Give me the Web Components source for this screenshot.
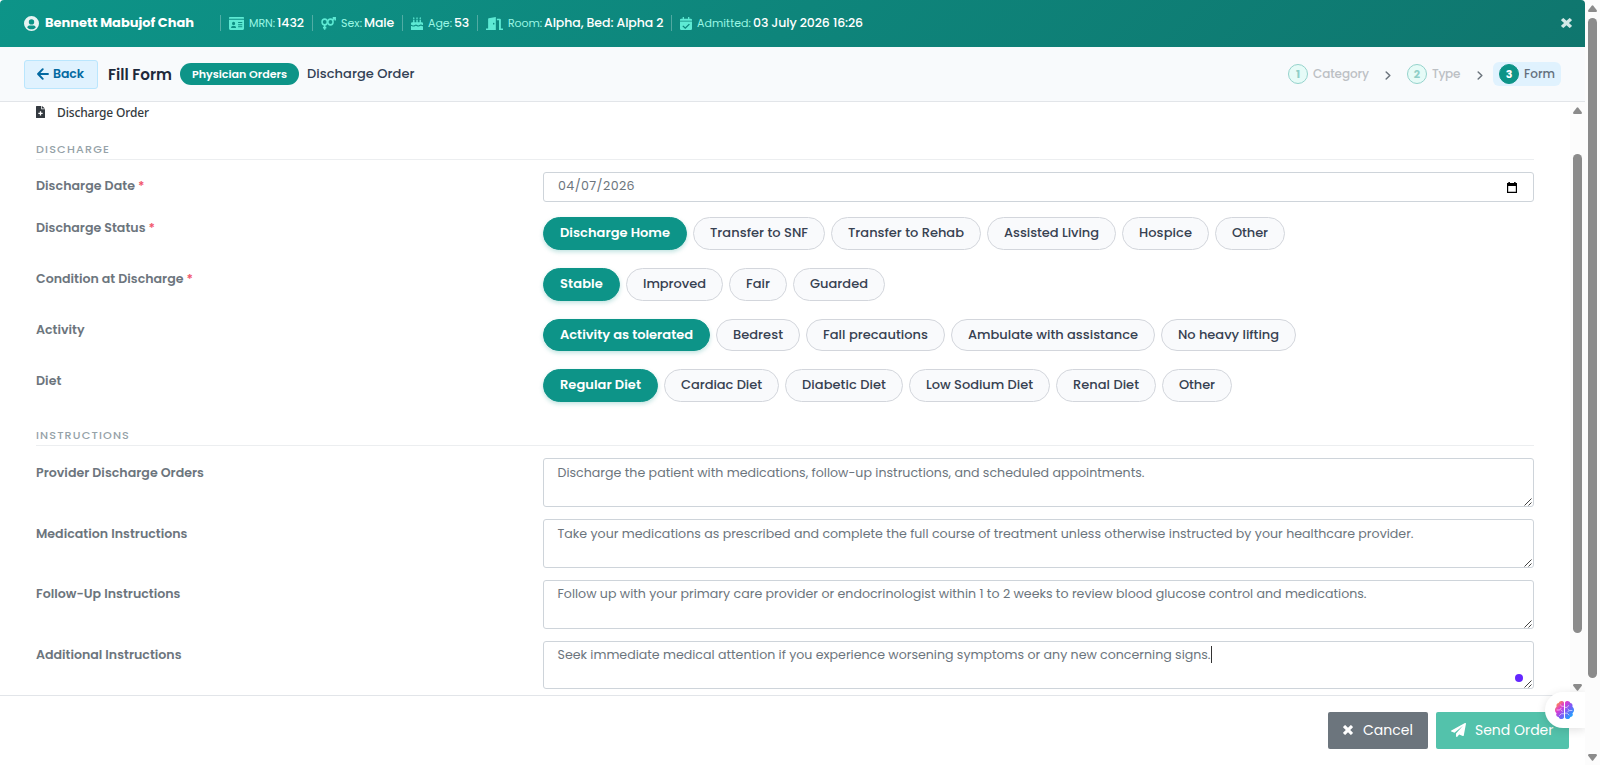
<!DOCTYPE html>
<html lang="en">
<head>
<meta charset="UTF-8">
<title>Discharge Order</title>
<style>
  body {
    margin: 0;
    font-family: Poppins, Inter, "Open Sans", sans-serif;
    background: #fff;
    overflow: hidden;
  }
</style>
</head>
<body>
<order-page></order-page>

<script>
const icons = {
  user: ["0 0 512 512", `<path fill-rule="evenodd" d="M256 0a256 256 0 1 0 0 512 256 256 0 0 0 0-512zm0 110a92 92 0 1 1 0 184 92 92 0 0 1 0-184zM110 390c12-44 48-66 82-66h128c34 0 70 22 82 66-36 42-88 66-146 66s-110-24-146-66z"/>`],
  card: ["0 0 576 448", `<path fill-rule="evenodd" d="M30 0h516a30 30 0 0 1 30 30v34H0V30A30 30 0 0 1 30 0zM0 96h576v304a48 48 0 0 1-48 48H48a48 48 0 0 1-48-48zm176 64a60 60 0 1 0 0 120 60 60 0 0 0 0-120zM80 376h192c0-40-24-66-56-66h-80c-32 0-56 26-56 66zM350 176v32h160v-32zm0 72v32h160v-32zm0 72v32h160v-32z"/>`],
  sex: ["0 0 640 512", `<g fill="none" stroke="currentColor" stroke-width="64"><circle cx="156" cy="196" r="112"/><circle cx="404" cy="196" r="112"/><path d="M156 306v200M84 416h144M488 116L600 26M500 32h106v106"/></g>`],
  cake: ["0 0 448 512", `<path d="M80 110h50v110h-50zM200 110h50v110h-50zM320 110h50v110h-50zM105 0c34 42 34 88 0 88s-34-46 0-88zM225 0c34 42 34 88 0 88s-34-46 0-88zM345 0c34 42 34 88 0 88s-34-46 0-88zM48 210h352a48 48 0 0 1 48 48v58c-40 0-50-24-88-24s-50 40-88 40-48-40-86-40-52 40-90 40-54-40-96-30v-44a48 48 0 0 1 48-48zM0 352c30-10 40 24 92 24s54-34 90-34 46 34 88 34 54-34 90-34 48 26 88 24v146H0z"/>`],
  door: ["0 0 640 512", `<path fill-rule="evenodd" d="M370 0v512H0v-64h80V80c0-14 8-24 20-28zM290 230a28 34 0 1 0 0 68 28 34 0 0 0 0-68zM410 64h110a40 40 0 0 1 40 40v344h80v64H490V128h-80z"/>`],
  calcheck: ["0 0 448 512", `<path fill-rule="evenodd" d="M100 0h48v64h152V0h48v64h52a48 48 0 0 1 48 48v32H0v-32a48 48 0 0 1 48-48h52zM0 176h448v288a48 48 0 0 1-48 48H48a48 48 0 0 1-48-48zm122 158-34 34 108 102 172-170-34-34-138 134z"/>`],
  times: ["0 0 352 352", `<path d="M86 8 176 98 266 8q12-10 24 0l54 54q10 12 0 24l-90 90 90 90q10 12 0 24l-54 54q-12 10-24 0l-90-90-90 90q-12 10-24 0L8 290q-10-12 0-24l90-90L8 86q-10-12 0-24L62 8q12-10 24 0z"/>`],
  arrow: ["0 0 448 448", `<path fill="none" stroke="currentColor" stroke-width="72" stroke-linecap="round" stroke-linejoin="round" d="M214 44 40 224l174 180M46 224h364"/>`],
  chevron: ["0 0 256 400", `<path fill="none" stroke="currentColor" stroke-width="62" stroke-linecap="round" stroke-linejoin="round" d="M50 40l156 160L50 360"/>`],
  file: ["0 0 384 512", `<path fill-rule="evenodd" d="M24 0h200v136h160v352a24 24 0 0 1-24 24H24a24 24 0 0 1-24-24V24A24 24 0 0 1 24 0zm232 0 128 104H256zM164 224v64h-64v56h64v64h56v-64h64v-56h-64v-64z"/>`],
  plane: ["0 0 512 512", `<path d="M476 3 12 271c-18 10-16 34 0 42l107 44L407 104 172 383v104c0 22 28 32 42 16l64-78 125 51c14 6 30-2 33-18l75-432c3-20-18-33-35-23z"/>`],
  calendar: ["0 0 11 12", `<path fill-rule="evenodd" d="M1.5 0h1.7v1h4.6V0h1.7v1H11v11H0V1h1.5zM1.3 4.3v6.4h8.4V4.3z"/>`],
  brain: ["0 0 36 34", `<defs><linearGradient id="g" gradientUnits="userSpaceOnUse" x1="4" y1="2" x2="32" y2="30"><stop offset="0" stop-color="#ff9a3c"/><stop offset=".3" stop-color="#e03ad0"/><stop offset=".6" stop-color="#7c5cf6"/><stop offset="1" stop-color="#18a8ff"/></linearGradient></defs>
    <path fill="url(#g)" d="M17 3v28c-2 4-9 4-10-1-4 0-6-4-4-7-4-3-4-9 0-12-1-4 1-7 4-7C8-1 16-1 17 3zM19 3v28c2 4 9 4 10-1 4 0 6-4 4-7 4-3 4-9 0-12 1-4-1-7-4-7-1-5-9-5-10-1z"/>
    <path fill="none" stroke="#fff" stroke-opacity=".8" stroke-width="1.4" d="M17 10h-4l-3-3M3 17h6l3-4M17 24h-5l-4 4M12 17l2 3M19 12h4l3-4M33 18h-6l-3-3M19 23h4l4 4M26 18l-2 3"/>`],
};

class UiIcon extends HTMLElement {
  constructor() {
    super();
    this.attachShadow({ mode: "open" });
  }

  connectedCallback() {
    const [box, shape] = icons[this.getAttribute("name")];
    const w = this.getAttribute("w") || 12;
    const h = this.getAttribute("h") || 12;

    this.shadowRoot.innerHTML = `
      <style>
        :host { display: block; flex: none; width: ${w}px; height: ${h}px; }
        svg { display: block; width: 100%; height: 100%; }
      </style>
      <svg viewBox="${box}" fill="currentColor" preserveAspectRatio="none">${shape}</svg>
    `;
  }
}

// One line of text, tracked so that it fills the width given in "w".
class TextLine extends HTMLElement {
  constructor() {
    super();
    this.attachShadow({ mode: "open" });
  }

  connectedCallback() {
    const w = Number(this.getAttribute("w"));

    this.shadowRoot.innerHTML = `
      <style>
        :host { display: block; flex: none; width: ${w}px; white-space: nowrap; }
        span { display: inline-block; }
      </style>
      <span><slot></slot></span>
    `;

    const span = this.shadowRoot.querySelector("span");
    const natural = span.getBoundingClientRect().width;
    span.style.letterSpacing = (w - natural) / this.textContent.length + "px";
  }
}

class PatientItem extends HTMLElement {
  constructor() {
    super();
    this.attachShadow({ mode: "open" });
  }

  connectedCallback() {
    const a = (name) => this.getAttribute(name);

    this.shadowRoot.innerHTML = `
      <style>
        :host {
          display: flex;
          align-items: center;
          box-sizing: border-box;
          flex: none;
          width: ${a("w")}px;
          height: 16px;
          padding-left: 8px;
          border-left: 1px solid rgba(255, 255, 255, 0.28);
          font-size: 12.5px;
          font-weight: 500;
          color: #fff;
        }
        ui-icon { color: #5eead4; margin-right: 5px; }
        .label { color: #99f6e4; font-size: 11px; font-weight: 400; margin: 1px 2px 0 0; }
      </style>
      <ui-icon name="${a("icon")}" w="${a("icon-w")}" h="13"></ui-icon>
      <text-line class="label" w="${a("label-w")}">${a("label")}</text-line>
      <text-line w="${a("value-w")}">${a("value")}</text-line>
    `;
  }
}

class PatientBar extends HTMLElement {
  constructor() {
    super();
    this.attachShadow({ mode: "open" });
  }

  connectedCallback() {
    this.shadowRoot.innerHTML = `
      <style>
        :host {
          display: flex;
          align-items: center;
          box-sizing: border-box;
          height: 47px;
          padding: 0 13px 1px 24px;
          border-radius: 4px 4px 0 0;
          background: linear-gradient(135deg, #0d9488 0%, #0f766e 100%);
          color: #fff;
        }
        .avatar { opacity: 0.9; margin-right: 6px; }
        .name { font-size: 13px; font-weight: 700; margin-right: 26px; }
        .close { margin-left: auto; color: #d3e8e6; }
      </style>
      <ui-icon class="avatar" name="user" w="15" h="15"></ui-icon>
      <text-line class="name" w="149">Bennett Mabujof Chah</text-line>
      <patient-item w="92" icon="card" icon-w="15" label="MRN:" label-w="26" value="1432" value-w="27"></patient-item>
      <patient-item w="90" icon="sex" icon-w="15" label="Sex:" label-w="21" value="Male" value-w="30"></patient-item>
      <patient-item w="75" icon="cake" icon-w="12" label="Age:" label-w="24" value="53" value-w="15"></patient-item>
      <patient-item w="194" icon="door" icon-w="17" label="Room:" label-w="34" value="Alpha, Bed: Alpha 2" value-w="119.5"></patient-item>
      <patient-item w="200" icon="calcheck" icon-w="12" label="Admitted:" label-w="54" value="03 July 2026 16:26" value-w="110"></patient-item>
      <ui-icon class="close" name="times" w="11" h="10"></ui-icon>
    `;
  }
}

class StepItem extends HTMLElement {
  constructor() {
    super();
    this.attachShadow({ mode: "open" });
  }

  connectedCallback() {
    this.shadowRoot.innerHTML = `
      <style>
        :host {
          display: flex;
          align-items: center;
          gap: 5px;
          height: 24px;
          padding: 0 6px;
          border-radius: 6px;
          font-size: 12px;
          font-weight: 500;
          color: #bcc0c4;
        }
        :host([active]) { background: #e0f2fe; color: #64707d; }
        .num {
          box-sizing: border-box;
          width: 20px;
          height: 20px;
          border: 1px solid #95d3cc;
          border-radius: 50%;
          display: grid;
          place-items: center;
          font-size: 11px;
          font-weight: 700;
          background: #e6fbf7;
          color: #8fcfc8;
        }
        :host([active]) .num { background: #0d9488; border-color: #0d9488; color: #fff; }
      </style>
      <div class="num">${this.getAttribute("num")}</div>
      <text-line w="${this.getAttribute("w")}">${this.getAttribute("label")}</text-line>
    `;
  }
}

class FormToolbar extends HTMLElement {
  constructor() {
    super();
    this.attachShadow({ mode: "open" });
  }

  connectedCallback() {
    this.shadowRoot.innerHTML = `
      <style>
        :host {
          display: flex;
          align-items: center;
          box-sizing: border-box;
          height: 55px;
          padding: 0 24px;
          background: #f8fafc;
          border-bottom: 1px solid #e2e5e9;
        }
        .back {
          display: flex;
          align-items: center;
          gap: 4px;
          box-sizing: border-box;
          width: 74px;
          height: 29px;
          padding: 0 12px;
          border: 1px solid #bae6fd;
          border-radius: 3px;
          background: #e0f2fe;
          color: #0369a1;
          font: 600 12.5px Poppins, Inter, sans-serif;
        }
        .title { margin-left: 10px; font-size: 15.2px; font-weight: 600; color: #1e293b; }
        .badge {
          display: grid;
          place-items: center;
          width: 119px;
          height: 22px;
          margin: 0 8px;
          border-radius: 11px;
          background: #0d9488;
          color: #fff;
          font-size: 11.1px;
          font-weight: 600;
        }
        .crumb { font-size: 13px; font-weight: 500; color: #334155; }
        .steps { display: flex; align-items: center; margin-left: auto; }
        .steps ui-icon { margin: 2px 10px 0; color: #6c757d; }
        .steps ui-icon.last { margin-left: 11px; }
      </style>
      <button class="back"><ui-icon name="arrow" w="12" h="12"></ui-icon><text-line w="31">Back</text-line></button>
      <text-line class="title" w="64">Fill Form</text-line>
      <div class="badge"><text-line w="95">Physician Orders</text-line></div>
      <text-line class="crumb" w="107.5">Discharge Order</text-line>
      <div class="steps">
        <step-item num="1" label="Category" w="56"></step-item>
        <ui-icon name="chevron" w="6" h="9"></ui-icon>
        <step-item num="2" label="Type" w="28"></step-item>
        <ui-icon class="last" name="chevron" w="6" h="9"></ui-icon>
        <step-item num="3" label="Form" w="31" active></step-item>
      </div>
    `;
  }
}

class SectionTitle extends HTMLElement {
  constructor() {
    super();
    this.attachShadow({ mode: "open" });
  }

  connectedCallback() {
    this.shadowRoot.innerHTML = `
      <style>
        :host {
          display: block;
          box-sizing: border-box;
          height: 20px;
          border-bottom: 1px solid #eceef0;
          font-size: 11.2px;
          line-height: 18px;
          font-weight: 500;
          color: #95a2a8;
        }
      </style>
      <text-line w="${this.getAttribute("w")}">${this.getAttribute("label")}</text-line>
    `;
  }
}

class FormRow extends HTMLElement {
  constructor() {
    super();
    this.attachShadow({ mode: "open" });
  }

  connectedCallback() {
    const star = this.hasAttribute("required") ? `<span class="star">*</span>` : "";

    this.shadowRoot.innerHTML = `
      <style>
        :host { display: flex; align-items: flex-start; height: ${this.getAttribute("h")}px; }
        .label {
          display: flex;
          flex: none;
          width: 507px;
          padding-top: ${this.getAttribute("top") || 2}px;
          font-size: 12.6px;
          line-height: 18px;
          font-weight: 600;
          color: #6c757d;
        }
        .star { margin-left: 3px; color: #f1556c; }
        .field { display: flex; flex: 1; gap: 6px; }
      </style>
      <div class="label"><text-line w="${this.getAttribute("w")}">${this.getAttribute("label")}</text-line>${star}</div>
      <div class="field"><slot></slot></div>
    `;
  }
}

class ChoicePill extends HTMLElement {
  constructor() {
    super();
    this.attachShadow({ mode: "open" });
  }

  connectedCallback() {
    const w = Number(this.getAttribute("w"));

    this.shadowRoot.innerHTML = `
      <style>
        :host {
          display: flex;
          justify-content: center;
          box-sizing: border-box;
          flex: none;
          width: ${w}px;
          height: ${this.getAttribute("h") || 33}px;
          border: 1px solid #d3d6dc;
          border-radius: 17px;
          background: #f9fafc;
          color: #374151;
          font-size: 13px;
          line-height: 30px;
          font-weight: 500;
          cursor: pointer;
        }
        :host([selected]) {
          background: #0d9488;
          border-color: #0d9488;
          color: #fff;
          font-weight: 600;
          box-shadow: 0 2px 4px rgba(13, 148, 136, 0.25);
        }
      </style>
      <text-line w="${w - 34}">${this.getAttribute("label")}</text-line>
    `;
  }
}

class DateField extends HTMLElement {
  constructor() {
    super();
    this.attachShadow({ mode: "open" });
  }

  connectedCallback() {
    this.shadowRoot.innerHTML = `
      <style>
        :host {
          display: flex;
          justify-content: space-between;
          box-sizing: border-box;
          flex: 1;
          height: 30px;
          padding: 0 16px 0 14px;
          border: 1px solid #ced4da;
          border-radius: 3px;
          font-size: 12.6px;
          line-height: 26px;
          color: #6c757d;
        }
        ui-icon { margin-top: 9px; color: #000; }
      </style>
      <text-line w="77">${this.getAttribute("value")}</text-line>
      <ui-icon name="calendar" w="10" h="11"></ui-icon>
    `;
  }
}

class NoteField extends HTMLElement {
  constructor() {
    super();
    this.attachShadow({ mode: "open" });
  }

  connectedCallback() {
    const active = this.hasAttribute("active");

    this.shadowRoot.innerHTML = `
      <style>
        :host {
          display: flex;
          position: relative;
          box-sizing: border-box;
          flex: 1;
          height: ${this.getAttribute("h") || 49}px;
          padding: ${this.getAttribute("top") || 5}px 14px 0 13.5px;
          border: 1px solid #ced4da;
          border-radius: 3px;
          font-size: 12.6px;
          line-height: 18px;
          color: #6c757d;
        }
        .caret { width: 1px; height: 17px; background: #333; }
        svg { position: absolute; right: 1px; bottom: 0; }
        .dot {
          position: absolute;
          right: 10px;
          bottom: 6px;
          width: 8px;
          height: 8px;
          border-radius: 50%;
          background: #6427ff;
        }
      </style>
      <text-line w="${this.getAttribute("w")}">${this.getAttribute("value")}</text-line>
      ${active ? `<i class="caret"></i><i class="dot"></i>` : ""}
      <svg width="8" height="8" viewBox="0 0 8 8"><path d="M.5 7.5l7-7M4.5 7.5l3-3" stroke="#444" fill="none"/></svg>
    `;
  }
}

class ScrollTrack extends HTMLElement {
  constructor() {
    super();
    this.attachShadow({ mode: "open" });
  }

  connectedCallback() {
    this.shadowRoot.innerHTML = `
      <style>
        :host {
          display: flex;
          flex-direction: column;
          align-items: center;
          box-sizing: border-box;
          flex: none;
          width: 15px;
          padding: 5px 0 4px;
          background: #fcfcfc;
        }
        .thumb {
          width: 9px;
          height: ${this.getAttribute("size")}px;
          margin-top: ${this.getAttribute("start")}px;
          border-radius: 5px;
          background: #8b8b8b;
        }
        svg { display: block; fill: #8b8b8b; }
        .down { margin-top: auto; }
      </style>
      <svg width="9" height="7"><path d="M3.7.7q.8-1 1.6 0L9 5.5Q9 7 8 7H1Q0 7 0 5.5z"/></svg>
      <div class="thumb"></div>
      <svg class="down" width="9" height="7"><path d="M3.7 6.3q.8 1 1.6 0L9 1.5Q9 0 8 0H1Q0 0 0 1.5z"/></svg>
    `;
  }
}

class DischargeForm extends HTMLElement {
  constructor() {
    super();
    this.attachShadow({ mode: "open" });
  }

  connectedCallback() {
    this.shadowRoot.innerHTML = `
      <style>
        :host { display: block; flex: 1; padding: 0 36px; }
        .heading {
          display: flex;
          align-items: center;
          gap: 12px;
          height: 20px;
          color: #343a40;
          font: 500 12px/16px "Noto Sans", "Open Sans", sans-serif;
        }
        .heading ui-icon { margin-bottom: 1px; }
        .heading text-line { margin-top: 1px; }
        .first { margin-top: 18px; margin-bottom: 12px; }
        .second { margin-top: 6px; margin-bottom: 12px; }
      </style>
      <div class="heading">
        <ui-icon name="file" w="9" h="12"></ui-icon>
        <text-line w="92">Discharge Order</text-line>
      </div>

      <section-title class="first" label="DISCHARGE" w="74"></section-title>
      <form-row label="Discharge Date" w="99" h="45" top="5" required>
        <date-field value="04/07/2026"></date-field>
      </form-row>
      <form-row label="Discharge Status" w="109.5" h="51" required>
        <choice-pill label="Discharge Home" w="144" selected></choice-pill>
        <choice-pill label="Transfer to SNF" w="132"></choice-pill>
        <choice-pill label="Transfer to Rehab" w="150"></choice-pill>
        <choice-pill label="Assisted Living" w="129"></choice-pill>
        <choice-pill label="Hospice" w="87"></choice-pill>
        <choice-pill label="Other" w="70"></choice-pill>
      </form-row>
      <form-row label="Condition at Discharge" w="147.5" h="51" required>
        <choice-pill label="Stable" w="77" selected></choice-pill>
        <choice-pill label="Improved" w="97"></choice-pill>
        <choice-pill label="Fair" w="58"></choice-pill>
        <choice-pill label="Guarded" w="92"></choice-pill>
      </form-row>
      <form-row label="Activity" w="48.5" h="50">
        <choice-pill label="Activity as tolerated" w="167" h="32" selected></choice-pill>
        <choice-pill label="Bedrest" w="84" h="32"></choice-pill>
        <choice-pill label="Fall precautions" w="139" h="32"></choice-pill>
        <choice-pill label="Ambulate with assistance" w="204" h="32"></choice-pill>
        <choice-pill label="No heavy lifting" w="135" h="32"></choice-pill>
      </form-row>
      <form-row label="Diet" w="25.5" h="51" top="3">
        <choice-pill label="Regular Diet" w="115" selected></choice-pill>
        <choice-pill label="Cardiac Diet" w="115"></choice-pill>
        <choice-pill label="Diabetic Diet" w="118"></choice-pill>
        <choice-pill label="Low Sodium Diet" w="141"></choice-pill>
        <choice-pill label="Renal Diet" w="100"></choice-pill>
        <choice-pill label="Other" w="70"></choice-pill>
      </form-row>

      <section-title class="second" label="INSTRUCTIONS" w="94"></section-title>
      <form-row label="Provider Discharge Orders" w="168" h="61" top="6">
        <note-field w="587" value="Discharge the patient with medications, follow-up instructions, and scheduled appointments."></note-field>
      </form-row>
      <form-row label="Medication Instructions" w="151.5" h="61" top="6">
        <note-field w="856" value="Take your medications as prescribed and complete the full course of treatment unless otherwise instructed by your healthcare provider."></note-field>
      </form-row>
      <form-row label="Follow-Up Instructions" w="144.5" h="61" top="5">
        <note-field w="809" top="4" value="Follow up with your primary care provider or endocrinologist within 1 to 2 weeks to review blood glucose control and medications."></note-field>
      </form-row>
      <form-row label="Additional Instructions" w="145.5" h="54" top="5">
        <note-field w="653" top="4" h="48" active value="Seek immediate medical attention if you experience worsening symptoms or any new concerning signs."></note-field>
      </form-row>
    `;
  }
}

class FormFooter extends HTMLElement {
  constructor() {
    super();
    this.attachShadow({ mode: "open" });
  }

  connectedCallback() {
    this.shadowRoot.innerHTML = `
      <style>
        :host {
          display: flex;
          justify-content: flex-end;
          align-items: flex-start;
          gap: 8px;
          box-sizing: border-box;
          position: relative;
          height: 70px;
          padding: 16px 16px 0;
          border-top: 1px solid #e2e5e9;
        }
        button {
          display: flex;
          align-items: center;
          box-sizing: border-box;
          height: 37px;
          padding: 0 15px 1px;
          border: 0;
          border-radius: 2px;
          background: #6c757d;
          color: #fff;
          font: 400 14px Poppins, Inter, sans-serif;
        }
        .cancel { width: 100px; gap: 10px; }
        .send { width: 133px; gap: 9px; background: #53c2ab; }
        .assistant {
          position: absolute;
          right: 0;
          top: -4px;
          display: flex;
          align-items: center;
          box-sizing: border-box;
          width: 40px;
          height: 36px;
          padding-left: 10px;
          border-radius: 18px 0 0 18px;
          background: #fff;
          box-shadow: 0 2px 10px rgba(0, 0, 0, 0.12);
          clip-path: inset(-20px 0 -20px -20px);
        }
      </style>
      <button class="cancel"><ui-icon name="times" w="10" h="10"></ui-icon><text-line w="50">Cancel</text-line></button>
      <button class="send"><ui-icon name="plane" w="15" h="14"></ui-icon><text-line w="78.5">Send Order</text-line></button>
      <div class="assistant"><ui-icon name="brain" w="19" h="18"></ui-icon></div>
    `;
  }
}

class OrderPage extends HTMLElement {
  constructor() {
    super();
    this.attachShadow({ mode: "open" });
  }

  connectedCallback() {
    this.shadowRoot.innerHTML = `
      <style>
        :host { display: flex; height: 765px; }
        main { display: flex; flex-direction: column; flex: 1; }
        .body { display: flex; flex: 1; min-height: 0; }
      </style>
      <main>
        <patient-bar></patient-bar>
        <form-toolbar></form-toolbar>
        <div class="body">
          <discharge-form></discharge-form>
          <scroll-track start="40" size="479"></scroll-track>
        </div>
        <form-footer></form-footer>
      </main>
      <scroll-track start="6" size="660"></scroll-track>
    `;
  }
}

customElements.define("ui-icon", UiIcon);
customElements.define("text-line", TextLine);
customElements.define("patient-item", PatientItem);
customElements.define("patient-bar", PatientBar);
customElements.define("step-item", StepItem);
customElements.define("form-toolbar", FormToolbar);
customElements.define("section-title", SectionTitle);
customElements.define("form-row", FormRow);
customElements.define("choice-pill", ChoicePill);
customElements.define("date-field", DateField);
customElements.define("note-field", NoteField);
customElements.define("scroll-track", ScrollTrack);
customElements.define("discharge-form", DischargeForm);
customElements.define("form-footer", FormFooter);
customElements.define("order-page", OrderPage);
</script>
</body>
</html>
